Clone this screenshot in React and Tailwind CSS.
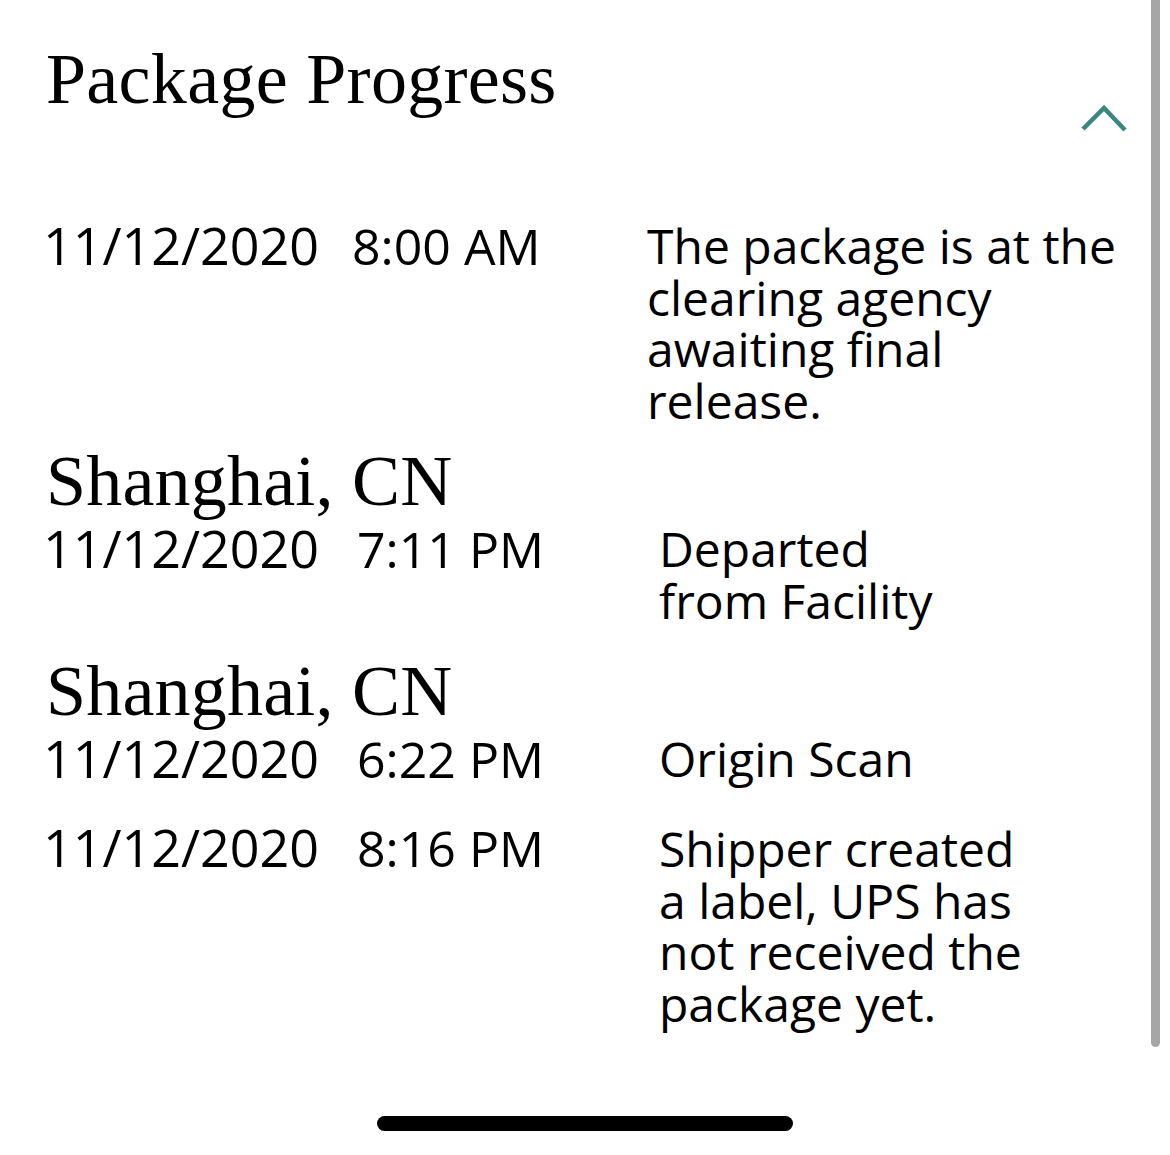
import React from "react";

const events = [
  {
    id: 1,
    location: null,
    date: "11/12/2020",
    time: "8:00 AM",
    lines: ["The package is at the", "clearing agency", "awaiting final", "release."],
    rowClass: "mt-[85px]",
    timeClass: "ml-[33px]",
    descClass: "pt-[1px]",
  },
  {
    id: 2,
    location: "Shanghai, CN",
    date: "11/12/2020",
    time: "7:11 PM",
    lines: ["Departed", "from Facility"],
    rowClass: "mt-[19px]",
    timeClass: "ml-[38px]",
    descClass: "pl-[12px] pt-[1px]",
  },
  {
    id: 3,
    location: "Shanghai, CN",
    date: "11/12/2020",
    time: "6:22 PM",
    lines: ["Origin Scan"],
    rowClass: "mt-[29px]",
    timeClass: "ml-[38px]",
    descClass: "pl-[12px] pt-[1px]",
  },
  {
    id: 4,
    location: null,
    date: "11/12/2020",
    time: "8:16 PM",
    lines: ["Shipper created", "a label, UPS has", "not received the", "package yet."],
    rowClass: "mt-[36px]",
    timeClass: "ml-[38px]",
    descClass: "pl-[12px] pt-[2px]",
  },
];

const ChevronUp = () => (
  <svg width="50" height="30" viewBox="0 0 50 30" className="mt-[61px] shrink-0">
    <polyline
      points="4,25 25,4 46,26"
      fill="none"
      stroke="#3a877f"
      strokeWidth="4.5"
      strokeLinecap="butt"
      strokeLinejoin="miter"
    />
  </svg>
);

const App = () => {
  return (
    <div className="relative flex min-h-[1155px] w-[1170px] flex-col overflow-hidden bg-white text-black">
      {/* scroll indicator */}
      <div className="absolute left-[1151px] top-0 h-[1047px] w-[9px] rounded-b-full bg-[#a6a6a6]"></div>

      <div className="flex items-start justify-between pl-[46px] pr-[41px] pt-[43px]">
        <h1 className="font-['Liberation_Serif',serif] text-[72px] font-normal leading-[72px] tracking-[0.3px]">
          Package Progress
        </h1>
        <ChevronUp />
      </div>

      <div className="flex flex-col pl-[43px]">
        {events.map((ev) => (
          <div key={ev.id} className={ev.rowClass}>
            {ev.location && (
              <div className="mb-[5px] pl-[3px] font-['Liberation_Serif',serif] text-[72px] leading-[72px] tracking-[0.2px]">
                {ev.location}
              </div>
            )}
            <div className="flex items-start">
              <div className="flex w-[604px] shrink-0 items-baseline font-['Open_Sans',sans-serif] leading-[51px]">
                <span className="text-[52px]">{ev.date}</span>
                <span className={`text-[50px] ${ev.timeClass}`}>{ev.time}</span>
              </div>
              <div
                className={`font-['Open_Sans',sans-serif] text-[48px] leading-[51.5px] ${ev.descClass}`}
              >
                {ev.lines.map((line) => (
                  <div key={line} className="whitespace-nowrap">
                    {line}
                  </div>
                ))}
              </div>
            </div>
          </div>
        ))}
      </div>

      <div className="mb-[24px] mt-auto flex justify-center">
        <div className="h-[15px] w-[416px] rounded-full bg-black"></div>
      </div>
    </div>
  );
};

export default App;
